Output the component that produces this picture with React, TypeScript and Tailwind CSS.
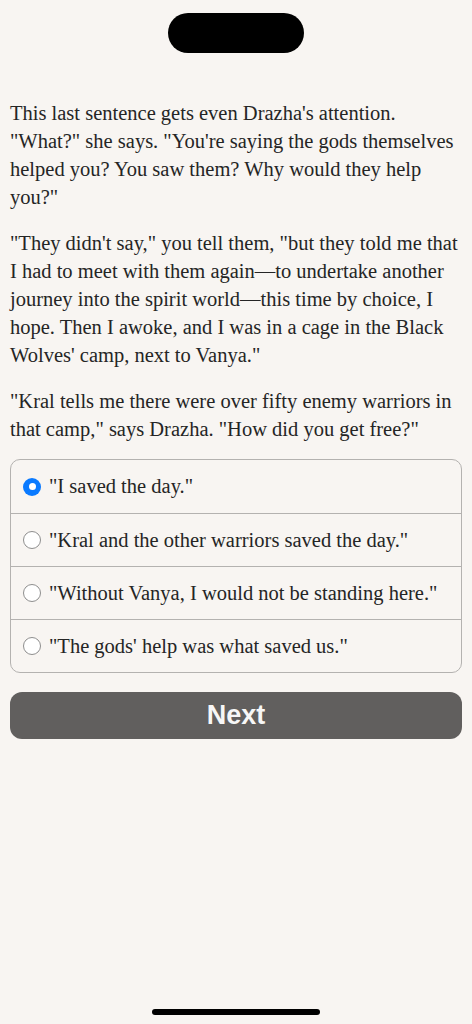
import React, { useState } from "react";

const paragraphs: string[][] = [
  [
    "This last sentence gets even Drazha's attention.",
    "\"What?\" she says. \"You're saying the gods themselves",
    "helped you? You saw them? Why would they help",
    "you?\"",
  ],
  [
    "\"They didn't say,\" you tell them, \"but they told me that",
    "I had to meet with them again\u2014to undertake another",
    "journey into the spirit world\u2014this time by choice, I",
    "hope. Then I awoke, and I was in a cage in the Black",
    "Wolves' camp, next to Vanya.\"",
  ],
  [
    "\"Kral tells me there were over fifty enemy warriors in",
    "that camp,\" says Drazha. \"How did you get free?\"",
  ],
];

const options = [
  '"I saved the day."',
  '"Kral and the other warriors saved the day."',
  '"Without Vanya, I would not be standing here."',
  '"The gods\' help was what saved us."',
];

export default function App() {
  const [sel, setSel] = useState(0);
  return (
    <div className="min-h-screen h-[1024px] bg-[#f8f5f2] flex flex-col text-[#252525] [font-family:'Liberation_Serif',serif]">
      <div className="mt-[13px] mx-auto w-[136px] h-[40px] rounded-full bg-black shrink-0" />
      <div className="px-[10px] mt-[46px] text-[20.5px] leading-[28px] flex flex-col gap-[18px]">
        {paragraphs.map((lines, i) => (
          <p key={i}>
            {lines.map((l, j) => (
              <span key={j} className="block whitespace-nowrap">
                {l}
              </span>
            ))}
          </p>
        ))}
      </div>
      <div className="mx-[10px] mt-[16px] border border-[#b4b2b0] rounded-[10px] flex flex-col">
        {options.map((o, i) => (
          <button
            key={i}
            onClick={() => setSel(i)}
            className={`h-[53px] flex items-center gap-[8px] px-[12px] text-left text-[20.5px] ${i > 0 ? "border-t border-[#b4b2b0]" : ""}`}
          >
            {sel === i ? (
              <span className="w-[18px] h-[18px] rounded-full bg-[#0a7aff] flex items-center justify-center shrink-0">
                <span className="w-[7px] h-[7px] rounded-full bg-white" />
              </span>
            ) : (
              <span className="w-[18px] h-[18px] rounded-full border border-[#8e8e8e] bg-white shrink-0" />
            )}
            <span>{o}</span>
          </button>
        ))}
      </div>
      <button className="mx-[10px] mt-[19px] h-[47px] rounded-[12px] bg-[#615f5e] text-[#f7f7f7] text-[27px] font-bold [font-family:'Liberation_Sans',sans-serif]">
        Next
      </button>
      <div className="flex-1" />
      <div className="mx-auto mb-[9px] w-[168px] h-[6px] rounded-full bg-black shrink-0" />
    </div>
  );
}
